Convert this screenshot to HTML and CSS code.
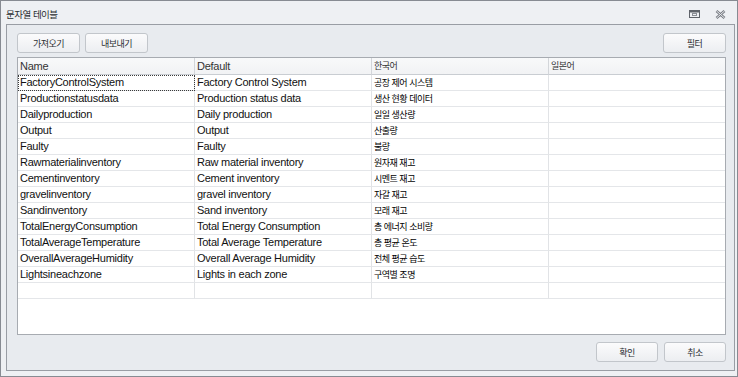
FILE: index.html
```html
<!DOCTYPE html>
<html lang="ko">
<head>
    <meta charset="UTF-8">
    <meta name="viewport" content="width=device-width, initial-scale=1.0">
    <title>문자열 테이블</title>
    <link rel="stylesheet" href="styles.css">
</head>
<body>
    <div class="window">
        <div class="titlebar">
            <span class="title ko">문자열 테이블</span>
            <div class="title-icons">
                <!-- restore -->
                <svg width="11" height="8" viewBox="0 0 11 8">
                    <rect x="0.5" y="0.5" width="10" height="7" fill="none" stroke="#5f636a"/>
                    <rect x="1" y="1" width="9" height="1.5" fill="#5f636a"/>
                    <rect x="3.5" y="3.5" width="4" height="2" fill="none" stroke="#8a8e95"/>
                </svg>
                <!-- close -->
                <svg width="11" height="9" viewBox="0 0 11 9">
                    <path d="M1.5 1 L9.5 8 M9.5 1 L1.5 8" stroke="#767a81" stroke-width="2.6" fill="none"/>
                    <path d="M1.5 1 L9.5 8 M9.5 1 L1.5 8" stroke="#e9ebee" stroke-width="1" fill="none"/>
                </svg>
            </div>
        </div>

        <div class="panel">
            <div class="toolbar">
                <button class="btn ko">가져오기</button>
                <button class="btn ko">내보내기</button>
                <span class="spacer"></span>
                <button class="btn ko">필터</button>
            </div>

            <!-- string table -->
            <div class="grid">
                <div class="row head">
                    <div class="cell">Name</div>
                    <div class="cell">Default</div>
                    <div class="cell ko">한국어</div>
                    <div class="cell ko">일본어</div>
                </div>
                <div class="row">
                    <div class="cell focus">FactoryControlSystem</div>
                    <div class="cell">Factory Control System</div>
                    <div class="cell ko">공장 제어 시스템</div>
                    <div class="cell"></div>
                </div>
                <div class="row">
                    <div class="cell">Productionstatusdata</div>
                    <div class="cell">Production status data</div>
                    <div class="cell ko">생산 현황 데이터</div>
                    <div class="cell"></div>
                </div>
                <div class="row">
                    <div class="cell">Dailyproduction</div>
                    <div class="cell">Daily production</div>
                    <div class="cell ko">일일 생산량</div>
                    <div class="cell"></div>
                </div>
                <div class="row">
                    <div class="cell">Output</div>
                    <div class="cell">Output</div>
                    <div class="cell ko">산출량</div>
                    <div class="cell"></div>
                </div>
                <div class="row">
                    <div class="cell">Faulty</div>
                    <div class="cell">Faulty</div>
                    <div class="cell ko">불량</div>
                    <div class="cell"></div>
                </div>
                <div class="row">
                    <div class="cell">Rawmaterialinventory</div>
                    <div class="cell">Raw material inventory</div>
                    <div class="cell ko">원자재 재고</div>
                    <div class="cell"></div>
                </div>
                <div class="row">
                    <div class="cell">Cementinventory</div>
                    <div class="cell">Cement inventory</div>
                    <div class="cell ko">시멘트 재고</div>
                    <div class="cell"></div>
                </div>
                <div class="row">
                    <div class="cell">gravelinventory</div>
                    <div class="cell">gravel inventory</div>
                    <div class="cell ko">자갈 재고</div>
                    <div class="cell"></div>
                </div>
                <div class="row">
                    <div class="cell">Sandinventory</div>
                    <div class="cell">Sand inventory</div>
                    <div class="cell ko">모래 재고</div>
                    <div class="cell"></div>
                </div>
                <div class="row">
                    <div class="cell">TotalEnergyConsumption</div>
                    <div class="cell">Total Energy Consumption</div>
                    <div class="cell ko">총 에너지 소비량</div>
                    <div class="cell"></div>
                </div>
                <div class="row">
                    <div class="cell">TotalAverageTemperature</div>
                    <div class="cell">Total Average Temperature</div>
                    <div class="cell ko">총 평균 온도</div>
                    <div class="cell"></div>
                </div>
                <div class="row">
                    <div class="cell">OverallAverageHumidity</div>
                    <div class="cell">Overall Average Humidity</div>
                    <div class="cell ko">전체 평균 습도</div>
                    <div class="cell"></div>
                </div>
                <div class="row">
                    <div class="cell">Lightsineachzone</div>
                    <div class="cell">Lights in each zone</div>
                    <div class="cell ko">구역별 조명</div>
                    <div class="cell"></div>
                </div>
                <!-- new row -->
                <div class="row">
                    <div class="cell"></div>
                    <div class="cell"></div>
                    <div class="cell"></div>
                    <div class="cell"></div>
                </div>
            </div>

            <div class="footer">
                <button class="btn small ko">확인</button>
                <button class="btn small ko">취소</button>
            </div>
        </div>
    </div>
</body>
</html>
```

FILE: styles.css
```css
body {
    margin: 0;
    padding: 0;
    font-family: "Liberation Sans", "Noto Sans CJK KR", sans-serif;
    font-size: 11px;
    background-color: #ffffff;
}
.ko {
    font-family: "Noto Sans CJK KR", "Liberation Sans", sans-serif;
    font-size: 9px;
    letter-spacing: -0.5px;
}
.window {
    width: 738px;
    height: 377px;
    box-sizing: border-box;
    border: 1px solid #878b92;
    background-color: #eef0f3;
    display: flex;
    flex-direction: column;
}
.titlebar {
    height: 23px;
    display: flex;
    align-items: center;
    padding-left: 5px;
    color: #2a2d31;
}
.title {
    font-size: 9.5px;
    margin-top: 3px;
}
.title-icons {
    margin-left: auto;
    margin-right: 11px;
    margin-top: 3px;
    display: flex;
    align-items: center;
    gap: 15px;
}
.title-icons svg {
    display: block;
}
.panel {
    flex: 1;
    margin: 0 2px 5px 5px;
    border: 1px solid #999da4;
    background-color: #e8ebef;
    padding: 8px 8px 8px 10px;
    display: flex;
    flex-direction: column;
}
.toolbar {
    display: flex;
    gap: 5px;
    margin-bottom: 4px;
}
.spacer {
    flex: 1;
}
.btn {
    width: 63px;
    height: 20px;
    padding: 0;
    border: 1px solid #c2c6cb;
    border-radius: 3px;
    background: linear-gradient(#fbfbfc, #eceef1);
    color: #2c2f33;
    cursor: pointer;
}
.btn.small {
    width: 62px;
}
.grid {
    height: 278px;
    box-sizing: border-box;
    border: 1px solid #a7abb1;
    background-color: #ffffff;
}
.row {
    display: grid;
    grid-template-columns: 177px 177px 177px 176px;
    height: 16px;
}
.cell {
    box-sizing: border-box;
    height: 16px;
    line-height: 15px;
    padding-left: 2px;
    border-right: 1px solid #e1e3e6;
    border-bottom: 1px solid #e4e6e9;
    white-space: nowrap;
    overflow: hidden;
    color: #111111;
    letter-spacing: -0.25px;
}
.cell:last-child {
    border-right: none;
}
.cell.ko {
    letter-spacing: -0.5px;
    color: #000000;
}
.row.head {
    height: 17px;
    background: linear-gradient(#f8f9fa, #f1f2f4);
}
.row.head .cell {
    height: 17px;
    line-height: 16px;
    color: #333333;
    border-right-color: #d3d6da;
    border-bottom-color: #c9cdd2;
}
.cell.focus {
    outline: 1px dotted #3a3a3a;
    outline-offset: -1px;
}
.footer {
    margin-top: 7px;
    display: flex;
    justify-content: flex-end;
    gap: 6px;
}
```
